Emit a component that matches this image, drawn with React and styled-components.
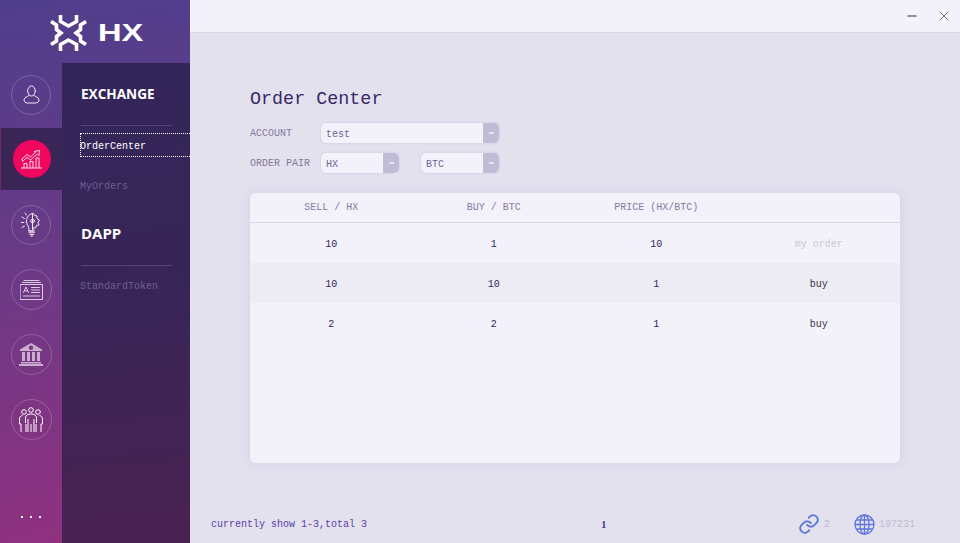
import React from "react";
import styled, { createGlobalStyle } from "styled-components";
import { X, Minus } from "lucide-react";

const mono = `"Liberation Mono", "DejaVu Sans Mono", monospace`;

const Global = createGlobalStyle`
  html, body { margin: 0; padding: 0; height: 100%; overflow: hidden; background: #e3e1ee; }
  * { box-sizing: border-box; }
`;

const Page = styled.div`
  width: 960px;
  height: 543px;
  display: flex;
  font-family: ${mono};
`;

const Sidebar = styled.aside`
  width: 190px;
  display: flex;
  flex-direction: column;
  background: linear-gradient(170deg, #4f3e8c 0%, #6a3a86 45%, #92307f 100%);
`;

const LogoBar = styled.div`
  height: 63px;
  display: flex;
  align-items: center;
  justify-content: center;
  gap: 11px;
  padding-left: 2px;
  padding-top: 3px;
`;

const LogoText = styled.span`
  font-family: "Liberation Sans", sans-serif;
  font-weight: 700;
  font-size: 23px;
  line-height: 1;
  color: #fff;
  display: inline-block;
  width: 44px;
  transform: scaleX(1.42);
  transform-origin: left center;
`;

const SideBody = styled.div`
  flex: 1;
  display: flex;
`;

const Rail = styled.nav`
  width: 62px;
  display: flex;
  flex-direction: column;
`;

const RailItem = styled.div`
  height: 65px;
  flex: none;
  display: flex;
  align-items: center;
  justify-content: center;

  &:first-child {
    padding-bottom: 2px;
  }
`;

const ActiveItem = styled(RailItem)`
  height: 62px;
  margin-bottom: 2px;
  background: #3a2557;
  border-left: 1px solid #6d2a68;
`;

const RailCircle = styled.div`
  width: ${(p) => p.$size || 40}px;
  height: ${(p) => p.$size || 40}px;
  border-radius: 50%;
  display: flex;
  align-items: center;
  justify-content: center;
  border: 1px solid rgba(255, 255, 255, 0.2);
`;

const ActiveCircle = styled.div`
  width: 38px;
  height: 38px;
  border-radius: 50%;
  display: flex;
  align-items: center;
  justify-content: center;
  background: #f0055f;
`;

const Dots = styled.div`
  margin-top: auto;
  height: 27px;
  display: flex;
  justify-content: center;
  gap: 7px;
  padding-right: 1px;

  span {
    width: 2px;
    height: 2px;
    background: #fff;
  }
`;

const Menu = styled.div`
  flex: 1;
  padding: 0 0 0 18px;
  background: linear-gradient(175deg, #33265a 0%, #392557 50%, #4a2252 100%);
`;

const MenuTitle = styled.div`
  font-family: "Open Sans", sans-serif;
  font-weight: 700;
  font-size: ${(p) => (p.$big ? "15px" : "13.6px")};
  color: #fff;
  line-height: 20px;
  padding: ${(p) => (p.$big ? "20px 0 22px 1px" : "21px 0 21px 1px")};
  margin-top: ${(p) => p.$top || 0}px;
`;

const MenuRule = styled.div`
  width: 91px;
  height: 1px;
  margin-left: 1px;
  background: #55427f;
`;

const MenuLink = styled.div`
  height: 24px;
  margin-top: ${(p) => p.$top}px;
  font-size: 10px;
  line-height: 25px;
  text-indent: -1px;
  color: ${(p) => (p.$active ? "#fff" : "#6f5f92")};
  border: ${(p) => (p.$active ? "1px dotted #fff" : "1px solid transparent")};
  border-right: none;
`;

const Main = styled.main`
  flex: 1;
  display: flex;
  flex-direction: column;
`;

const TitleBar = styled.header`
  height: 33px;
  flex: none;
  background: #f3f2fb;
  border-bottom: 1px solid #d8d6e6;
  display: flex;
  align-items: center;
  justify-content: flex-end;
  gap: 17px;
  padding: 0 8px 0 0;

  svg { display: block; }
`;

const Content = styled.div`
  flex: 1;
  padding: 54px 60px 0;
  display: flex;
  flex-direction: column;
`;

const Title = styled.h1`
  margin: 0;
  font-weight: 400;
  font-size: 18.4px;
  line-height: 26px;
  height: 22px;
  color: #372a68;
`;

const FormRow = styled.div`
  display: flex;
  align-items: center;
  height: 20px;
  margin-top: ${(p) => p.$top}px;
`;

const FormLabel = styled.label`
  width: 71px;
  font-size: 10px;
  color: #85789a;
`;

const Select = styled.div`
  width: ${(p) => p.$w}px;
  margin-left: ${(p) => p.$left || 0}px;
  height: 20px;
  display: flex;
  align-items: center;
  justify-content: space-between;
  background: #f3f2fb;
  border-radius: 5px;
  box-shadow: 0 0 2px rgba(120, 110, 170, 0.3);
  font-size: 10px;
  color: #6f6590;
  padding-left: 5px;
  overflow: hidden;
`;

const SelectText = styled.span`
  padding-top: 2px;
`;

const Caret = styled.span`
  width: 16px;
  height: 20px;
  background: #c1bcd6;
  display: flex;
  align-items: center;
  justify-content: center;

  &::after {
    content: "";
    width: 5px;
    height: 2px;
    background: #e6e4f1;
  }
`;

const Card = styled.section`
  margin-top: 20px;
  height: 270px;
  background: #f3f2fb;
  border-radius: 6px;
  box-shadow: 0 0 12px rgba(130, 120, 180, 0.18);
  overflow: hidden;
`;

const HeadRow = styled.div`
  height: 30px;
  display: grid;
  grid-template-columns: repeat(4, 1fr);
  align-items: center;
  text-align: center;
  border-bottom: 1px solid #d9d6e8;
  font-size: 10px;
  color: #85799f;
`;

const Row = styled.div`
  height: 40px;
  padding-top: 2px;
  display: grid;
  grid-template-columns: repeat(4, 1fr);
  align-items: center;
  text-align: center;
  font-size: 10px;
  color: #2e2a5c;
  background: ${(p) => (p.$alt ? "#edecf5" : "transparent")};
`;

const Action = styled.span`
  color: ${(p) => (p.$muted ? "#c9c7d4" : "#3a3146")};
`;

const Footer = styled.footer`
  height: 40px;
  flex: none;
  display: grid;
  grid-template-columns: 390px 1fr auto;
  align-items: center;
  padding: 2px 45px 0 21px;
  font-size: 10px;
  color: #5a3fa6;
`;

const PageNum = styled.b`
  font-family: "Liberation Serif", serif;
  font-size: 11px;
  color: #4e3a9c;
`;

const Status = styled.div`
  display: flex;
  align-items: center;
  color: #bdbccf;
`;

const StatusItem = styled.span`
  display: flex;
  align-items: center;
  gap: 4px;
  margin-left: ${(p) => p.$left || 0}px;
`;

const icon = { fill: "none", stroke: "#fff", strokeWidth: 1, strokeLinecap: "round", strokeLinejoin: "round" };

const LogoMark = () => (
  <svg width="37" height="36" viewBox="0 0 37 36">
    <g fill="none" stroke="#fff" strokeWidth="3.6">
      <path d="M10.500 0v6.500l8 4.500 8-4.500V0" />
      <path d="M10.500 36v-6.500l8-4.500 8 4.500V36" />
      <path d="M1 6.500l5.500 3.500v4.500L11 18l-4.500 3.500V26L1 29.500" />
      <path d="M36 6.500L30.500 10v4.500L26 18l4.500 3.500V26L36 29.500" />
    </g>
  </svg>
);

const UserIcon = () => (
  <svg width="17" height="19" viewBox="0 0 17 19" {...icon} opacity="0.9">
    <ellipse cx="8.500" cy="6" rx="3.800" ry="5" />
    <path d="M6 10.500c-1.500 1.500-5 1.500-5 4.500 0 1.800 1.500 3 3.500 3h8c2 0 3.500-1.200 3.500-3 0-3-3.500-3-5-4.500" />
  </svg>
);

const ChartIcon = () => (
  <svg width="21" height="19" viewBox="0 0 21 19" {...icon} strokeDasharray="1.600 .5" opacity="0.85">
    <path d="M0 18h21" />
    <path d="M3 17.500v-4h3v4M9 17.500v-6h3v6M15 17.500V8h3v9.500" />
    <path d="M1 9l5-4.500 3.500 2.500 5-4.500L13 1.500l5.500-1-.5 5-1.500-1.500-7 6-3.500-2.500-4.500 4z" />
  </svg>
);

const BulbIcon = () => (
  <svg width="21" height="25" viewBox="0 0 21 25" {...icon} opacity="0.9">
    <path d="M1 5l2.500 1.500M0 10.500h3M1 15.500l2.500-1.500M4 1l1.500 2" />
    <path d="M8 17c0-3-2.500-3.500-2.500-8 0-4 3-7.500 7-7.500l1 2 2.500.5v2.500l2.500 1.500-1.500 2.500 1 2.500-2.500.5-1 2.500H12v3H8z" />
    <path d="M11.500 2v15" />
    <circle cx="11.500" cy="9" r="1.800" />
    <path d="M8 19h5.500M8 20.800h5.500M9 22.600h3.500M10 24h1.500" />
  </svg>
);

const CardIcon = () => (
  <svg width="23" height="20" viewBox="0 0 23 20" {...icon} opacity="0.75">
    <path d="M4 .5h15M2.500 2.500h18" />
    <rect x=".5" y="4.500" width="22" height="15" />
    <path d="M3.500 12.500L6 7l2.500 5.500M4.500 10.800h3" />
    <path d="M11.500 7.500h8M11.500 10h8M11.500 12.500h8M3.500 16h16" />
  </svg>
);

const BankIcon = () => (
  <svg width="24" height="23" viewBox="0 0 24 23" fill="#fff" opacity="0.6">
    <path d="M12 0L1 6.500V8h22V6.500zM12 2.500a2.200 2.200 0 1 1 0 4.400 2.200 2.200 0 0 1 0-4.400z" fillRule="evenodd" />
    <path d="M3 9h3v9H3zM8 9h3v9H8zM13 9h3v9h-3zM18 9h3v9h-3zM2 19h20v1.500H2zM0 21h24v2H0z" />
  </svg>
);

const TeamIcon = () => (
  <svg width="24" height="25" viewBox="0 0 24 25" {...icon} strokeLinecap="butt">
    <circle cx="12" cy="3" r="2.300" />
    <circle cx="5" cy="5" r="2.300" />
    <circle cx="19" cy="5" r="2.300" />
    <path d="M3.500 8.500C1.500 9 .5 10 .5 12v5H2v8M7 25v-8M20.500 8.500c2 .5 3 1.500 3 3.500v5H22v8M17 25v-8" />
    <path d="M6.500 16v-5c0-3 2.500-4 5.500-4s5.500 1 5.500 4v5" />
    <path d="M9 25V12M12 25v-8M15 25V12" />
  </svg>
);

const LinkIcon = () => (
  <svg width="22" height="22" viewBox="0 0 24 24" fill="none" stroke="#5f76dc" strokeWidth="2" strokeLinecap="round" strokeLinejoin="round">
    <path d="M10 13a5 5 0 0 0 7.500.5l3-3a5 5 0 0 0-7-7l-1.700 1.700" />
    <path d="M14 11a5 5 0 0 0-7.500-.5l-3 3a5 5 0 0 0 7 7l1.700-1.700" />
  </svg>
);

const GlobeIcon = () => (
  <svg width="21" height="21" viewBox="0 0 21 21" fill="none" stroke="#5f76dc" strokeWidth="1.300">
    <circle cx="10.500" cy="10.500" r="9.500" />
    <ellipse cx="10.500" cy="10.500" rx="4.500" ry="9.500" />
    <path d="M10.500 1v19M1 10.500h19M2.500 6h16M2.500 15h16" />
  </svg>
);

const rows = [
  { sell: "10", buy: "1", price: "10", action: "my order", muted: true },
  { sell: "10", buy: "10", price: "1", action: "buy" },
  { sell: "2", buy: "2", price: "1", action: "buy" },
];

export default function App() {
  return (
    <Page>
      <Global />
      <Sidebar>
        <LogoBar>
          <LogoMark />
          <LogoText>HX</LogoText>
        </LogoBar>
        <SideBody>
          <Rail>
            <RailItem><RailCircle><UserIcon /></RailCircle></RailItem>
            <ActiveItem><ActiveCircle><ChartIcon /></ActiveCircle></ActiveItem>
            <RailItem><RailCircle><BulbIcon /></RailCircle></RailItem>
            <RailItem><RailCircle $size={41}><CardIcon /></RailCircle></RailItem>
            <RailItem><RailCircle $size={41}><BankIcon /></RailCircle></RailItem>
            <RailItem><RailCircle $size={41}><TeamIcon /></RailCircle></RailItem>
            <Dots><span /><span /><span /></Dots>
          </Rail>
          <Menu>
            <MenuTitle>EXCHANGE</MenuTitle>
            <MenuRule />
            <MenuLink $active $top={7}>OrderCenter</MenuLink>
            <MenuLink $top={16}>MyOrders</MenuLink>
            <MenuTitle $big $top={6}>DAPP</MenuTitle>
            <MenuRule />
            <MenuLink $top={7}>StandardToken</MenuLink>
          </Menu>
        </SideBody>
      </Sidebar>
      <Main>
        <TitleBar>
          <Minus size={14} color="#2e2560" strokeWidth={1.8} />
          <X size={16} color="#6f6a88" strokeWidth={1.4} />
        </TitleBar>
        <Content>
          <Title>Order Center</Title>
          <FormRow $top={14}>
            <FormLabel>ACCOUNT</FormLabel>
            <Select $w={178}><SelectText>test</SelectText><Caret /></Select>
          </FormRow>
          <FormRow $top={10}>
            <FormLabel>ORDER PAIR</FormLabel>
            <Select $w={78}><SelectText>HX</SelectText><Caret /></Select>
            <Select $w={78} $left={22}><SelectText>BTC</SelectText><Caret /></Select>
          </FormRow>
          <Card>
            <HeadRow>
              <span>SELL / HX</span>
              <span>BUY / BTC</span>
              <span>PRICE (HX/BTC)</span>
              <span />
            </HeadRow>
            {rows.map((r, i) => (
              <Row key={i} $alt={i === 1}>
                <span>{r.sell}</span>
                <span>{r.buy}</span>
                <span>{r.price}</span>
                <Action $muted={r.muted}>{r.action}</Action>
              </Row>
            ))}
          </Card>
        </Content>
        <Footer>
          <span>currently show 1-3,total 3</span>
          <PageNum>1</PageNum>
          <Status>
            <StatusItem><LinkIcon />2</StatusItem>
            <StatusItem $left={24}><GlobeIcon />187231</StatusItem>
          </Status>
        </Footer>
      </Main>
    </Page>
  );
}
